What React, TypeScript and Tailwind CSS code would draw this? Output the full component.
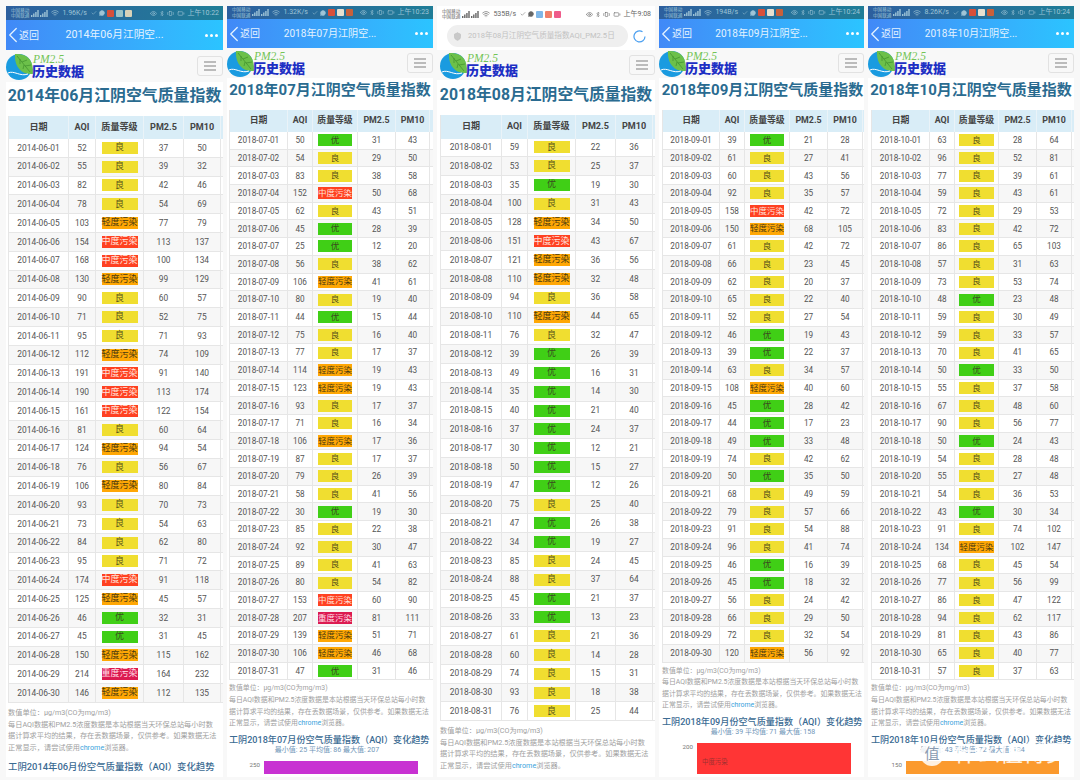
import { Battery, Bluetooth, Check, ChevronLeft, Eye, MessageCircle, Shield, Vibrate, Wifi } from 'lucide-react'

const june = '52 良 37 50|55 良 39 32|82 良 42 46|78 良 54 69|103 轻 77 79|154 中 113 137|168 中 100 134|130 轻 99 129|90 良 60 57|71 良 52 75|95 良 71 93|112 轻 74 109|191 中 91 140|190 中 113 174|161 中 122 154|81 良 60 64|124 轻 94 54|76 良 56 67|106 轻 80 84|93 良 70 73|73 良 54 63|84 良 62 80|95 良 71 72|174 中 91 118|125 轻 45 57|46 优 32 31|45 优 31 45|150 轻 115 162|214 重 164 232|146 轻 112 135'
const july = '50 优 31 43|54 良 29 50|83 良 38 58|152 中 50 68|62 良 43 51|45 优 28 39|25 优 12 20|56 良 38 62|106 轻 41 61|80 良 19 40|44 优 15 44|75 良 16 40|77 良 17 37|114 轻 19 43|123 轻 19 43|93 良 17 37|71 良 16 34|106 轻 17 36|87 良 17 37|79 良 26 39|58 良 41 56|30 优 19 30|85 良 22 38|92 良 30 47|89 良 41 63|80 良 54 82|153 中 60 90|207 重 81 111|139 轻 51 71|106 轻 46 68|47 优 31 46'
const august = '59 良 22 36|53 良 25 37|35 优 19 30|100 良 31 43|128 轻 34 50|151 中 43 67|121 轻 36 56|110 轻 32 48|94 良 36 58|110 轻 44 65|76 良 32 47|39 优 26 39|49 优 16 31|35 优 14 30|40 优 21 40|37 优 24 37|30 优 12 21|50 优 15 27|47 优 12 26|75 良 25 40|47 优 26 38|34 优 19 27|85 良 24 45|88 良 37 64|45 优 21 37|33 优 13 23|61 良 21 36|60 良 14 28|74 良 15 31|93 良 18 38|76 良 25 44'
const september = '39 优 21 28|61 良 27 41|60 良 43 56|92 良 35 57|158 中 42 72|150 轻 68 105|61 良 42 72|66 良 23 45|62 良 20 37|65 良 22 40|52 良 27 54|46 优 19 43|39 优 22 37|63 良 34 57|108 轻 40 60|45 优 28 42|44 优 17 23|49 优 33 48|74 良 42 62|50 优 35 50|68 良 49 59|79 良 57 66|91 良 54 88|96 良 41 74|46 优 16 39|45 优 18 32|56 良 24 42|66 良 29 50|72 良 32 54|120 轻 56 92'
const october = '63 良 28 64|96 良 52 81|77 良 39 61|59 良 43 61|72 良 29 53|83 良 42 72|86 良 65 103|57 良 31 63|73 良 53 74|48 优 23 48|59 良 30 49|59 良 33 57|70 良 41 65|50 优 33 50|55 良 37 58|67 良 48 60|90 良 56 77|50 优 24 43|54 良 28 48|55 良 27 48|54 良 36 53|43 优 30 34|91 良 74 102|134 轻 102 147|68 良 45 54|77 良 56 99|86 良 47 122|94 良 62 117|81 良 43 86|65 良 40 77|57 良 37 63'

const levels: Record<string, { label: string; className: string }> = {
  优: { label: '优', className: 'bg-[#40cf16] text-[#3a4a20]' },
  良: { label: '良', className: 'bg-[#f0de30] text-[#55501a]' },
  轻: { label: '轻度污染', className: 'bg-[#ffa705] text-[#4a3a10]' },
  中: { label: '中度污染', className: 'bg-[#ff4122] text-[#ffe4dc]' },
  重: { label: '重度污染', className: 'bg-[#dc1a50] text-[#ffdfe6]' },
}

const Signal = () => (
  <svg width="8" height="7" viewBox="0 0 8 7" className="fill-current">
    <rect x="0" y="5" width="1.4" height="2" />
    <rect x="2.1" y="3.5" width="1.4" height="3.5" />
    <rect x="4.2" y="2" width="1.4" height="5" />
    <rect x="6.3" y="0" width="1.4" height="7" />
  </svg>
)

const StatusBar = ({ speed, time, chips, className, light }: { speed: string; time: string; chips: string[]; className: string; light?: boolean }) => (
  <div className={`flex items-center pl-[5px] pr-[4px] ${light ? 'text-[#666]' : 'text-[#9fc4d6]'} ${className}`}>
    <div className="text-[4.6px] leading-[5.4px] whitespace-nowrap">
      <div>中国移动</div>
      <div>中国联通</div>
    </div>
    <div className="flex items-center gap-[1px] ml-[2px]">
      <Signal />
      <Signal />
    </div>
    <Wifi className="w-[8px] h-[8px] ml-[3px]" />
    <span className="text-[7px] ml-[3px] whitespace-nowrap">{speed}</span>
    <div className="flex items-center gap-[2px] ml-[4px]">
      <Check className="w-[6px] h-[6px]" />
      <MessageCircle className="w-[6px] h-[6px] fill-current" />
      {chips.map((chip, i) => (
        <span key={i} className={`w-[7px] h-[7px] rounded-[1px] ${chip}`} />
      ))}
    </div>
    <div className="flex items-center gap-[2px] ml-auto">
      <Eye className="w-[7px] h-[7px]" />
      <Bluetooth className="w-[6px] h-[7px]" />
      <Vibrate className="w-[7px] h-[7px]" />
      <Battery className="w-[10px] h-[7px]" />
      <span className="text-[7px] whitespace-nowrap">{time}</span>
    </div>
  </div>
)

const NavBar = ({ title, className }: { title: string; className: string }) => (
  <div className={`flex items-center justify-between bg-linear-to-r from-[#4189f7] to-[#2bc4ff] text-[#e4f3ff] ${className}`}>
    <div className="flex items-center w-[52px] text-[10px]">
      <ChevronLeft className="w-[26px] h-[26px] -ml-[6px] -mr-[7px] shrink-0" strokeWidth={1.2} />
      返回
    </div>
    <div className="whitespace-nowrap">{title}</div>
    <div className="flex items-center justify-end gap-[2.2px] w-[52px] pr-[5px]">
      <span className="w-[3px] h-[3px] rounded-full bg-white" />
      <span className="w-[3px] h-[3px] rounded-full bg-white" />
      <span className="w-[3px] h-[3px] rounded-full bg-white" />
    </div>
  </div>
)

const Logo = ({ className }: { className: string }) => (
  <div className={`flex items-center bg-[#f8f8f8] ${className}`}>
    <svg width="27" height="27" viewBox="0 0 27 27" className="shrink-0">
      <circle cx="13" cy="14" r="13" fill="#1a9be0" />
      <path d="M9 1 C20 0 28 6 27 21 C16 22 8 14 9 1Z" fill="#6cc04a" />
      <path d="M11 3 L24 19 M16 9 L21 7 M19 13 L25 12 M14 6 L14 11 M18 12 L17 16" stroke="#3f8f2c" strokeWidth="0.7" fill="none" />
      <path d="M2 20 C8 17 14 24 22 21" stroke="#fff" strokeWidth="1" fill="none" />
    </svg>
    <div className="-ml-[1px] flex flex-col leading-none">
      <span className="font-['Liberation_Serif',serif] italic text-[11.5px] leading-[10px] text-[#73c455] ml-[1px]">PM2.5</span>
      <span className="text-[13px] font-black text-[#1d2fc4] mt-[1px] whitespace-nowrap">历史数据</span>
    </div>
    <div className="ml-auto flex flex-col justify-center gap-[2.5px] w-[26px] h-[20px] border border-[#e2e2e2] rounded-[3px] px-[6px]">
      <span className="h-[1.5px] bg-[#bbb]" />
      <span className="h-[1.5px] bg-[#bbb]" />
      <span className="h-[1.5px] bg-[#bbb]" />
    </div>
  </div>
)

const DataTable = ({ month, data, columns, headH, rowH, text, badge }: { month: string; data: string; columns: string; headH: string; rowH: string; text: string; badge: string }) => (
  <div className={`border-l border-[#e6e6e6] ${text}`}>
    <div className={`grid ${columns} ${headH} bg-[#d9edf7] font-bold text-[#444] text-[1.08em]`}>
      {['日期', 'AQI', '质量等级', 'PM2.5', 'PM10'].map((h) => (
        <div key={h} className="flex items-center justify-center border-r border-[#eaf3f8]">{h}</div>
      ))}
    </div>
    {data.split('|').map((row, i) => {
      const [aqi, level, pm25, pm10] = row.split(' ')
      const day = String(i + 1).padStart(2, '0')
      return (
        <div key={day} className={`grid ${columns} ${rowH} border-b border-[#e6e6e6] text-[#555] ${i % 2 ? 'bg-[#f7f7f7]' : 'bg-white'}`}>
          <div className="flex items-center justify-center border-r border-[#e6e6e6]">{month}-{day}</div>
          <div className="flex items-center justify-center border-r border-[#e6e6e6]">{aqi}</div>
          <div className="flex items-center justify-center border-r border-[#e6e6e6]">
            <span className={`flex items-center justify-center h-[12px] whitespace-nowrap ${badge} ${levels[level].className}`}>{levels[level].label}</span>
          </div>
          <div className="flex items-center justify-center border-r border-[#e6e6e6]">{pm25}</div>
          <div className="flex items-center justify-center border-r border-[#e6e6e6]">{pm10}</div>
        </div>
      )
    })}
  </div>
)

const Notes = ({ className }: { className: string }) => (
  <div className={`text-[#a0a0a0] leading-[11.6px] whitespace-nowrap ${className}`}>
    <div>数值单位：μg/m3(CO为mg/m3)</div>
    <div>每日AQI数据和PM2.5浓度数据是本站根据当天环保总站每小时数</div>
    <div>据计算求平均的结果，存在丢数据场景，仅供参考。如果数据无法</div>
    <div>
      正常显示，请尝试使用<span className="text-[#38a3dc]">chrome</span>浏览器。
    </div>
  </div>
)

const TrendTitle = ({ text, className }: { text: string; className: string }) => (
  <div className={`font-medium text-[#3b6b93] leading-[11px] whitespace-nowrap ${className}`}>{text}</div>
)

const Stats = ({ text, className }: { text: string; className: string }) => (
  <div className={`text-center text-[#6f95b8] leading-[8px] whitespace-nowrap ${className}`}>{text}</div>
)

const App = () => {
  return (
    <div className="relative flex w-[1080px] h-[780px] overflow-hidden bg-[#f8f8f8] pl-[6px] pt-[6px] gap-[4px] font-[Roboto,'Noto_Sans_CJK_SC',sans-serif]">
      <div className="w-[217px] h-[771px] overflow-hidden bg-white">
        <StatusBar className="h-[14px] bg-linear-to-r from-[#2d5f9e] to-[#1f7d97]" speed="1.96K/s" time="上午10:22" chips={['bg-[#d8503a]', 'bg-[#9bc4c8]', 'bg-[#d9d2b8]']} />
        <NavBar className="h-[30px] text-[10.7px]" title="2014年06月江阴空..." />
        <Logo className="h-[32px]" />
        <div className="flex items-center justify-center h-[34px] text-[15.9px] font-bold text-[#2a6b90] whitespace-nowrap pb-[6px]">2014年06月江阴空气质量指数</div>
        <div className="pl-[2px]">
          <DataTable month="2014-06" data={june} columns="grid-cols-[60px_27px_48px_40px_37px]" headH="h-[23px]" rowH="h-[18.8px]" text="text-[8.4px]" badge="w-[36px] text-[9px]" />
          <Notes className="text-[7.2px] mt-[4px]" />
          <TrendTitle className="text-[9.4px] mt-[8px]" text="工阴2014年06月份空气质量指数（AQI）变化趋势" />
        </div>
      </div>

      <div className="w-[206px] h-[771px] overflow-hidden bg-white">
        <StatusBar className="h-[13px] bg-linear-to-r from-[#2d5f9e] to-[#1f7d97]" speed="1.32K/s" time="上午10:23" chips={['bg-[#d8503a]', 'bg-[#e8e0d0]', 'bg-[#c9603a]']} />
        <NavBar className="h-[29px] text-[10.1px]" title="2018年07月江阴空..." />
        <Logo className="h-[30px]" />
        <div className="flex items-center justify-center h-[32px] text-[15px] font-bold text-[#2a6b90] whitespace-nowrap pb-[8px]">2018年07月江阴空气质量指数</div>
        <div className="pl-[2px]">
          <DataTable month="2018-07" data={july} columns="grid-cols-[58px_25px_45px_38px_34px]" headH="h-[22px]" rowH="h-[17.7px]" text="text-[8.2px]" badge="w-[34.5px] text-[8.5px]" />
          <Notes className="text-[6.9px] mt-[3px]" />
          <TrendTitle className="text-[9.1px] mt-[5px]" text="工阴2018年07月份空气质量指数（AQI）变化趋势" />
          <Stats className="text-[7px] pr-[8px]" text="最小值: 25 平均值: 86 最大值: 207" />
          <div className="flex items-start gap-[4px] mt-[7px]">
            <span className="w-[31px] text-right text-[6.2px] leading-[8px] text-[#777]">250</span>
            <div className="w-[154px] h-[13px] bg-[#c832d2]" />
          </div>
        </div>
      </div>

      <div className="w-[218px] h-[771px] overflow-hidden bg-white">
        <StatusBar light className="h-[16px] bg-white" speed="535B/s" time="上午9:08" chips={['bg-[#7fb7e8]', 'bg-[#f0806a]', 'bg-[#ef5c8a]']} />
        <div className="flex items-center h-[28px] pl-[10px]">
          <div className="flex items-center w-[181px] h-[22px] rounded-full bg-[#efefef] pl-[6px] text-[#c2c2c2]">
            <Shield className="w-[9px] h-[9px] shrink-0 fill-[#c9c9c9]" />
            <span className="ml-[6px] text-[7.6px] whitespace-nowrap">2018年08月江阴空气质量指数AQI_PM2.5日</span>
          </div>
          <svg width="13" height="13" viewBox="0 0 13 13" className="ml-[5px]">
            <path d="M9.5 1.8 A5.5 5.5 0 1 0 12 6.5" fill="none" stroke="#4a9ff0" strokeWidth="1.2" />
          </svg>
        </div>
        <Logo className="h-[30px] pl-[3px]" />
        <div className="flex items-center justify-center h-[35px] text-[15.8px] font-bold text-[#2a6b90] whitespace-nowrap pb-[5px]">2018年08月江阴空气质量指数</div>
        <div className="pl-[3px]">
          <DataTable month="2018-08" data={august} columns="grid-cols-[61px_26px_48px_40px_37px]" headH="h-[23.5px]" rowH="h-[18.8px]" text="text-[8.4px]" badge="w-[36px] text-[9px]" />
          <Notes className="text-[7.2px] mt-[4px]" />
        </div>
      </div>

      <div className="w-[205px] h-[771px] overflow-hidden bg-white">
        <StatusBar className="h-[13px] bg-linear-to-r from-[#2d5f9e] to-[#1f7d97]" speed="194B/s" time="上午10:24" chips={['bg-[#d8503a]', 'bg-[#e8e0d0]', 'bg-[#c9603a]']} />
        <NavBar className="h-[29px] text-[10.1px]" title="2018年09月江阴空..." />
        <Logo className="h-[30px]" />
        <div className="flex items-center justify-center h-[32px] text-[15px] font-bold text-[#2a6b90] whitespace-nowrap pb-[8px] pl-[2px]">2018年09月江阴空气质量指数</div>
        <div className="pl-[3px]">
          <DataTable month="2018-09" data={september} columns="grid-cols-[57px_25px_45px_38px_35px]" headH="h-[22px]" rowH="h-[17.7px]" text="text-[8.2px]" badge="w-[34.5px] text-[8.5px]" />
          <Notes className="text-[6.9px] mt-[3px]" />
          <TrendTitle className="text-[9.1px] mt-[5px]" text="工阴2018年09月份空气质量指数（AQI）变化趋势" />
          <Stats className="text-[7px]" text="最小值: 39 平均值: 71 最大值: 158" />
          <div className="flex items-start gap-[4px] mt-[7px]">
            <span className="w-[31px] text-right text-[6.2px] leading-[8px] text-[#777]">200</span>
            <div className="flex items-start w-[154px] h-[31px] bg-[#ff3535] pl-[5px] pt-[15px] text-[6.4px] leading-[8px] text-[#a03030]">中度污染</div>
          </div>
        </div>
      </div>

      <div className="w-[206px] h-[771px] overflow-hidden bg-white">
        <StatusBar className="h-[13px] bg-linear-to-r from-[#2d5f9e] to-[#1f7d97]" speed="8.26K/s" time="上午10:24" chips={['bg-[#d8503a]', 'bg-[#e8e0d0]', 'bg-[#c9603a]']} />
        <NavBar className="h-[29px] text-[10.1px]" title="2018年10月江阴空..." />
        <Logo className="h-[30px]" />
        <div className="flex items-center justify-center h-[32px] text-[15px] font-bold text-[#2a6b90] whitespace-nowrap pb-[8px]">2018年10月江阴空气质量指数</div>
        <div className="pl-[3px]">
          <DataTable month="2018-10" data={october} columns="grid-cols-[58px_25px_44px_38px_35px]" headH="h-[22px]" rowH="h-[17.7px]" text="text-[8.2px]" badge="w-[34.5px] text-[8.5px]" />
          <Notes className="text-[6.9px] mt-[3px]" />
          <TrendTitle className="text-[9.1px] mt-[5px]" text="工阴2018年10月份空气质量指数（AQI）变化趋势" />
          <Stats className="text-[7px]" text="最小值: 43 平均值: 72 最大值: 134" />
          <div className="flex items-start gap-[4px] mt-[7px]">
            <span className="w-[31px] text-right text-[6.2px] leading-[8px] text-[#777]">150</span>
            <div className="w-[153px] h-[13px] bg-[#fb9a2e]" />
          </div>
        </div>
      </div>

      <div className="absolute left-[920px] top-[741px] flex items-center gap-[10px] text-white/85">
        <span className="flex items-center justify-center w-[24px] h-[24px] rounded-full bg-white/85 text-[#8a9bb0] text-[15px] leading-none">值</span>
        <span className="text-[23px] leading-[26px] whitespace-nowrap">什么值得买</span>
      </div>
    </div>
  )
}

export default App
